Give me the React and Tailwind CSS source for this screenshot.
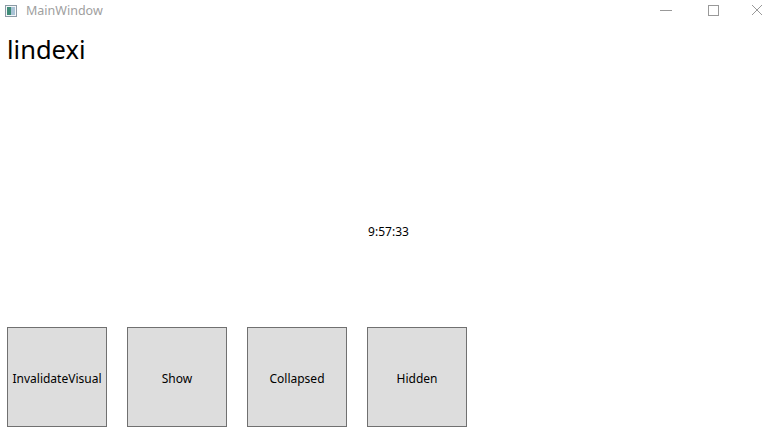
import { useState } from "react";

const buttons = ["InvalidateVisual", "Show", "Collapsed", "Hidden"];

const App = () => {
  const [time] = useState("9:57:33");

  return (
    <div
      className="w-[771px] h-[430px] bg-white flex flex-col overflow-hidden"
      style={{ fontFamily: '"Noto Sans", "Microsoft YaHei", sans-serif' }}
    >
      <div className="h-[22px] flex items-center shrink-0">
        <svg width="12" height="12" viewBox="0 0 12 12" className="ml-[5px]">
          <rect x="0.5" y="0.5" width="11" height="11" fill="#f4f6f8" stroke="#8c9aa6" />
          <rect x="2" y="2" width="4" height="8" fill="#3f8c78" />
          <rect x="6" y="2" width="4" height="8" fill="#a9c3d6" />
        </svg>
        <span className="ml-[9px] text-[12.5px] text-[#a0a0a0]">MainWindow</span>
        <div className="ml-auto flex items-center h-full">
          <svg width="46" height="22" viewBox="0 0 46 22">
            <line x1="16" y1="10.5" x2="28" y2="10.5" stroke="#999" strokeWidth="1" />
          </svg>
          <svg width="46" height="22" viewBox="0 0 46 22">
            <rect x="18.5" y="5.5" width="10" height="10" fill="none" stroke="#999" strokeWidth="1" />
          </svg>
          <svg width="35" height="22" viewBox="0 0 35 22">
            <path d="M16 5 L26 15 M26 5 L16 15" stroke="#999" strokeWidth="1" />
          </svg>
        </div>
      </div>

      <div className="flex-1 grid">
        <div className="col-start-1 row-start-1 self-start pl-[7px] pt-[15px] text-[25.5px] leading-none text-black">
          lindexi
        </div>
        <div className="col-start-1 row-start-1 self-center justify-self-center pt-[12px] pl-[6px] text-[12px] text-black">
          {time}
        </div>
        <div className="col-start-1 row-start-1 self-end flex gap-[20px] pl-[7px] pb-[3px]">
          {buttons.map((b) => (
            <div
              key={b}
              className="w-[100px] h-[100px] border border-[#707070] bg-[#dddddd] flex items-center justify-center pt-[3px] text-[12px] text-black"
            >
              {b}
            </div>
          ))}
        </div>
      </div>
    </div>
  );
};

export default App;
